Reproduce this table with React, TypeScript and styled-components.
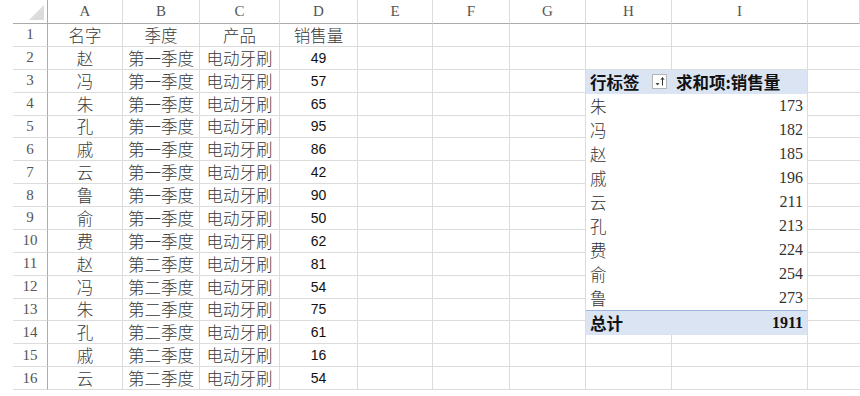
import React from "react";
import styled, { createGlobalStyle } from "styled-components";

const GlobalStyle = createGlobalStyle`
  html, body { margin: 0; padding: 0; background: #fff; }
  body { width: 860px; height: 396px; overflow: hidden; }
`;

const COLS = ["A", "B", "C", "D", "E", "F", "G", "H", "I", ""];
const ROW_H = 22.875;

const rows: Array<[string, string, string, string]> = [
  ["赵", "第一季度", "电动牙刷", "49"],
  ["冯", "第一季度", "电动牙刷", "57"],
  ["朱", "第一季度", "电动牙刷", "65"],
  ["孔", "第一季度", "电动牙刷", "95"],
  ["戚", "第一季度", "电动牙刷", "86"],
  ["云", "第一季度", "电动牙刷", "42"],
  ["鲁", "第一季度", "电动牙刷", "90"],
  ["俞", "第一季度", "电动牙刷", "50"],
  ["费", "第一季度", "电动牙刷", "62"],
  ["赵", "第二季度", "电动牙刷", "81"],
  ["冯", "第二季度", "电动牙刷", "54"],
  ["朱", "第二季度", "电动牙刷", "75"],
  ["孔", "第二季度", "电动牙刷", "61"],
  ["戚", "第二季度", "电动牙刷", "16"],
  ["云", "第二季度", "电动牙刷", "54"],
];

const pivot: Array<[string, number]> = [
  ["朱", 173],
  ["冯", 182],
  ["赵", 185],
  ["戚", 196],
  ["云", 211],
  ["孔", 213],
  ["费", 224],
  ["俞", 254],
  ["鲁", 273],
];

const Sheet = styled.div`
  display: grid;
  margin-left: 13px;
  grid-template-columns: 35px 75px 77px 80px 78px 75px 77px 76px 86px 136px 52px;
  grid-template-rows: 24px repeat(16, ${ROW_H}px);
  font-family: "Noto Sans CJK SC", sans-serif;
  color: #333;
`;

const Corner = styled.div`
  position: relative;
  border-right: 1px solid #ababab;
  border-bottom: 1px solid #ababab;
  &::after {
    content: "";
    position: absolute;
    right: 3px;
    bottom: 3px;
    width: 0;
    height: 0;
    border-left: 15px solid transparent;
    border-bottom: 15px solid #dcdcdc;
  }
`;

const ColHead = styled.div`
  display: flex;
  align-items: center;
  justify-content: center;
  border-bottom: 1px solid #ababab;
  border-right: 1px solid #dcdcdc;
  font-family: "Liberation Serif", serif;
  font-size: 15px;
  color: #555;
`;

const RowHead = styled.div`
  display: flex;
  align-items: center;
  justify-content: center;
  border-right: 1px solid #ababab;
  border-bottom: 1px solid #dcdcdc;
  font-family: "Liberation Serif", serif;
  font-size: 15px;
  color: #555;
`;

const Cell = styled.div<{ $num?: boolean; $last?: boolean }>`
  display: flex;
  align-items: center;
  justify-content: center;
  border-right: ${(p) => (p.$last ? "none" : "1px solid #dcdcdc")};
  border-bottom: 1px solid #dcdcdc;
  font-size: ${(p) => (p.$num ? "14px" : "16.5px")};
  font-family: ${(p) =>
    p.$num ? `"Liberation Sans", Arial, sans-serif` : `"Noto Sans CJK SC", sans-serif`};
  font-weight: ${(p) => (p.$num ? 400 : 300)};
  color: ${(p) => (p.$num ? "#111" : "#3a3a3a")};
  white-space: nowrap;
  overflow: hidden;
`;

const Pivot = styled.div`
  grid-column: 9 / span 2;
  grid-row: 4 / span 11;
  display: grid;
  grid-template-columns: 86px 135px;
  grid-template-rows: repeat(11, 1fr);
  border-right: 1px solid #dcdcdc;
  border-bottom: 1px solid #dcdcdc;
  background: #fff;
`;

const PivotCell = styled.div<{ $kind?: "head" | "total"; $right?: boolean }>`
  display: flex;
  align-items: center;
  justify-content: ${(p) => (p.$right ? "flex-end" : "flex-start")};
  padding: ${(p) => (p.$right ? "0 4px 0 0" : "0 0 0 4px")};
  background: ${(p) => (p.$kind ? "#dbe4f2" : "transparent")};
  border-top: ${(p) => (p.$kind === "total" ? "1px solid #9db6dc" : "none")};
  font-family: ${(p) =>
    p.$right && p.$kind !== "head"
      ? `"Liberation Serif", "Noto Sans CJK SC", serif`
      : `"Noto Sans CJK SC", sans-serif`};
  font-size: ${(p) => (p.$right && p.$kind !== "head" ? "16px" : "16.5px")};
  font-weight: ${(p) => (p.$kind ? 700 : 300)};
  color: ${(p) => (p.$kind ? "#111" : "#333")};
  white-space: nowrap;
`;

const HeadLabel = styled(PivotCell)`
  gap: 12px;
`;

const FilterBtn = styled.span`
  display: inline-flex;
  width: 15px;
  height: 15px;
  border: 1px solid #b5b5b5;
  background: #fff;
  box-sizing: border-box;
`;

const SortFilterIcon = () => (
  <svg width="13" height="13" viewBox="0 0 13 13">
    <path d="M2.5 8 L6.5 8 L4.5 10.5 Z" fill="#444" />
    <path d="M9.5 10.5 V3" stroke="#333" strokeWidth="1" />
    <path d="M8 4.8 L9.5 2.5 L11 4.8" stroke="#333" strokeWidth="1" fill="none" />
  </svg>
);

const PivotTable = () => (
  <Pivot>
    <HeadLabel $kind="head">
      行标签
      <FilterBtn>
        <SortFilterIcon />
      </FilterBtn>
    </HeadLabel>
    <PivotCell $kind="head">求和项:销售量</PivotCell>
    {pivot.map(([name, v]) => (
      <React.Fragment key={name}>
        <PivotCell>{name}</PivotCell>
        <PivotCell $right>{v}</PivotCell>
      </React.Fragment>
    ))}
    <PivotCell $kind="total">总计</PivotCell>
    <PivotCell $kind="total" $right>
      1911
    </PivotCell>
  </Pivot>
);

const inPivot = (r: number, c: number) => r >= 3 && r <= 13 && (c === 7 || c === 8);

export default function App() {
  const data: string[][] = [["名字", "季度", "产品", "销售量"], ...rows];
  return (
    <>
      <GlobalStyle />
      <Sheet>
        <Corner />
        {COLS.map((c, i) => (
          <ColHead key={i}>{c}</ColHead>
        ))}
        {Array.from({ length: 16 }, (_, ri) => {
          const r = ri + 1;
          return (
            <React.Fragment key={r}>
              <RowHead>{r}</RowHead>
              {COLS.map((_, ci) => {
                if (inPivot(r, ci)) return null;
                const v = ci < 4 ? data[ri][ci] : "";
                return (
                  <Cell
                    key={ci}
                    $num={ci === 3 && r > 1}
                    $last={ci === 9}
                    style={{ gridRow: r + 1, gridColumn: ci + 2 }}
                  >
                    {v}
                  </Cell>
                );
              })}
            </React.Fragment>
          );
        })}
        <PivotTable />
      </Sheet>
    </>
  );
}
